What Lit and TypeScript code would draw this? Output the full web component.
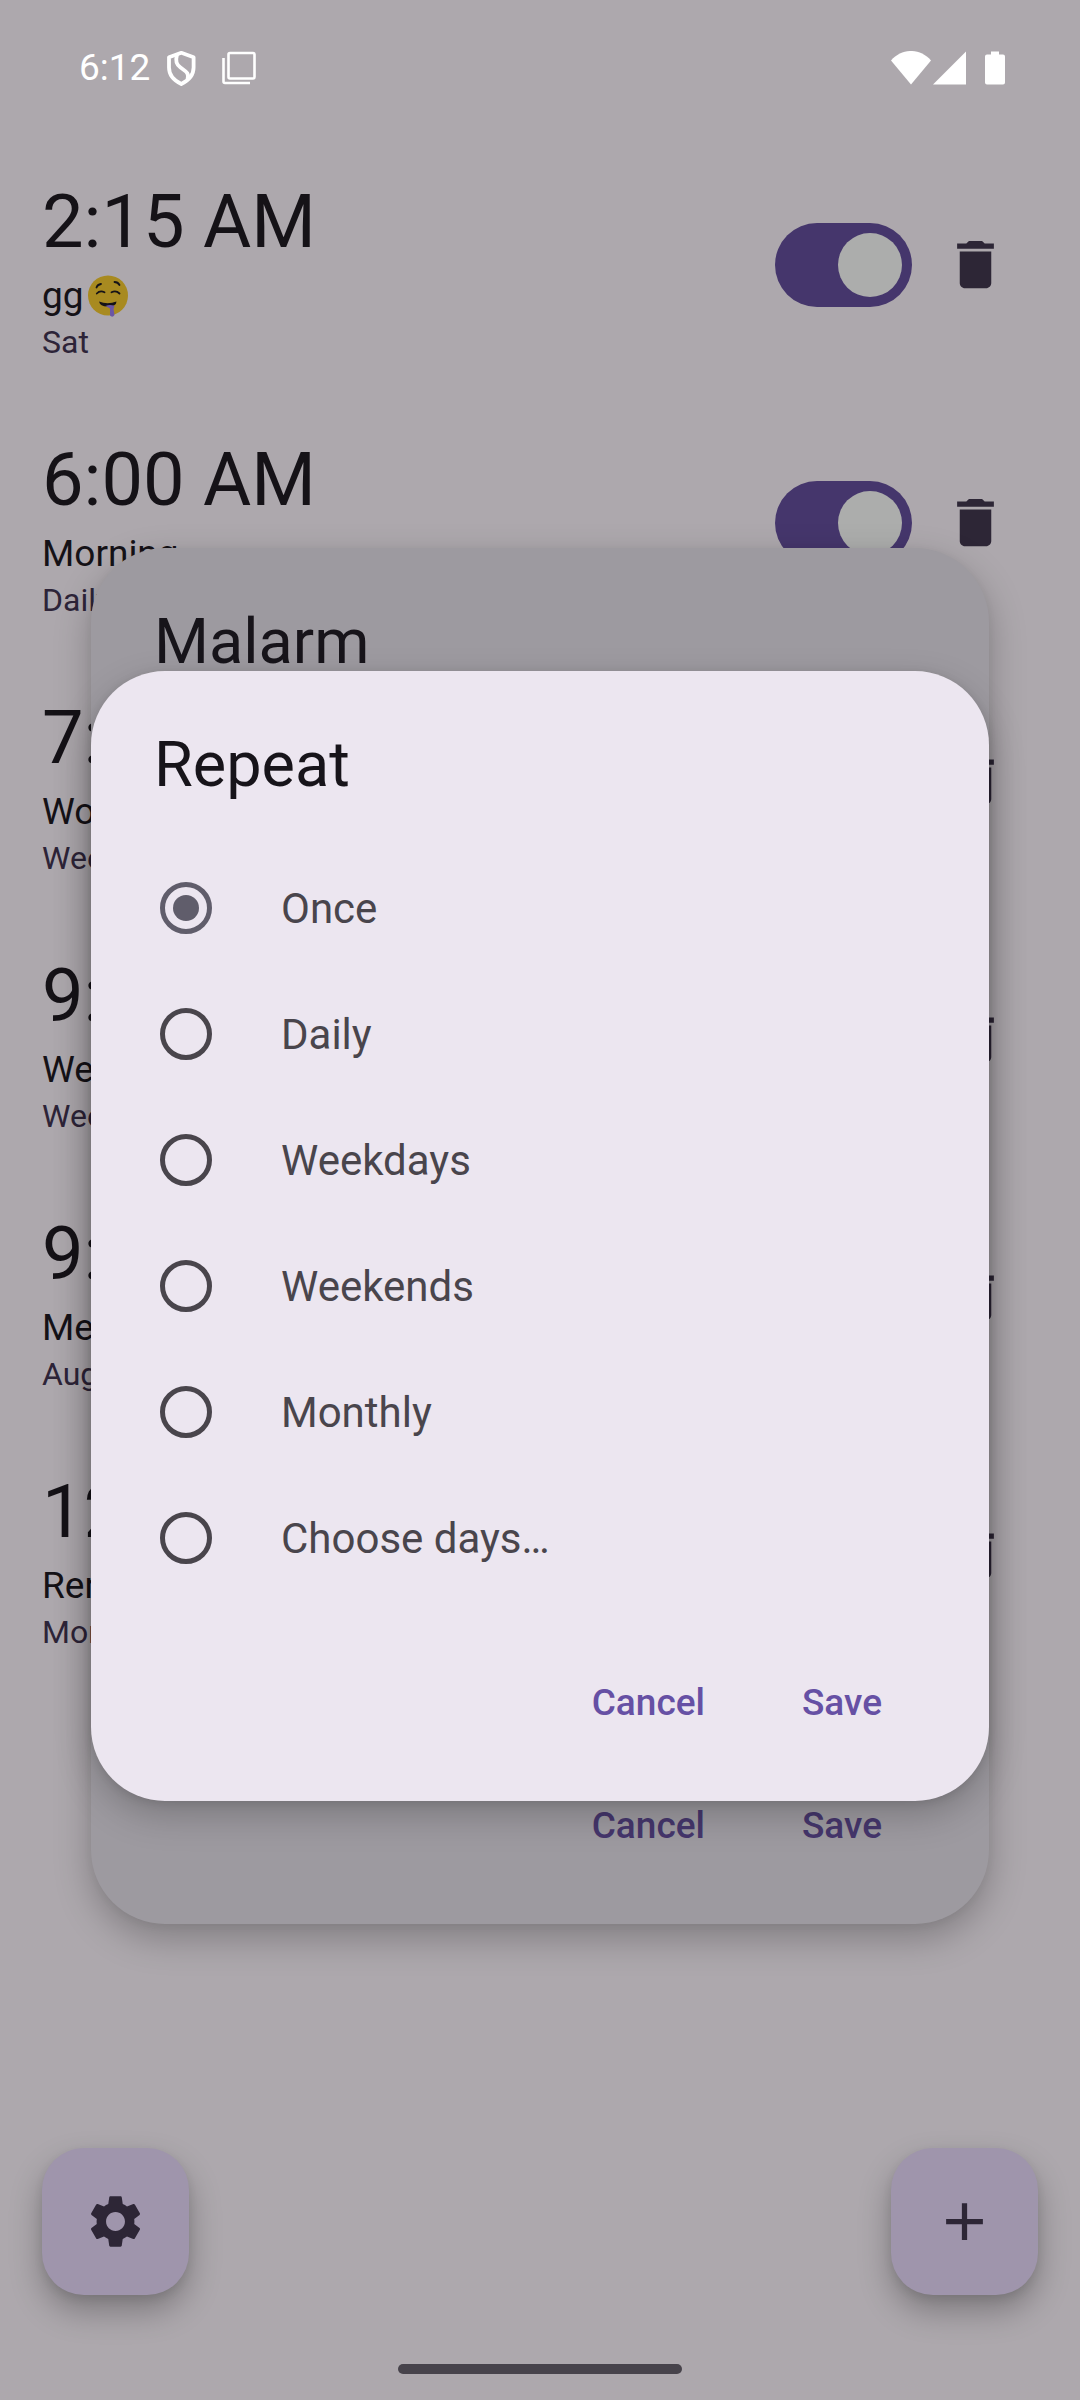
import { LitElement, html, css, svg } from "lit";
import { customElement, property, state } from "lit/decorators.js";

interface Alarm {
  time: string;
  label: string;
  repeat: string;
  emoji?: boolean;
}

const ALARMS: Alarm[] = [
  { time: "2:15 AM", label: "gg", repeat: "Sat", emoji: true },
  { time: "6:00 AM", label: "Morning", repeat: "Daily" },
  { time: "7:30 AM", label: "Work", repeat: "Weekdays" },
  { time: "9:00 AM", label: "Weekend", repeat: "Weekends" },
  { time: "9:30 AM", label: "Meeting", repeat: "Aug 12" },
  { time: "12:00 PM", label: "Rent", repeat: "Monthly" },
];

const REPEAT_OPTIONS = ["Once", "Daily", "Weekdays", "Weekends", "Monthly", "Choose days…"];

const ICONS = {
  trash: svg`<path d="M6 19c0 1.1.9 2 2 2h8c1.1 0 2-.9 2-2V7H6v12zM19 4h-3.5l-1-1h-5l-1 1H5v2h14V4z"/>`,
  plus: svg`<path d="M19 13h-6v6h-2v-6H5v-2h6V5h2v6h6v2z"/>`,
  gear: svg`<path d="M19.14,12.94c0.04,-0.3 0.06,-0.61 0.06,-0.94c0,-0.32 -0.02,-0.64 -0.07,-0.94l2.03,-1.58c0.18,-0.14 0.23,-0.41 0.12,-0.61l-1.92,-3.32c-0.12,-0.22 -0.37,-0.29 -0.59,-0.22l-2.39,0.96c-0.5,-0.38 -1.03,-0.7 -1.62,-0.94L14.4,2.81c-0.04,-0.24 -0.24,-0.41 -0.48,-0.41h-3.84c-0.24,0 -0.43,0.17 -0.47,0.41L9.25,5.35C8.66,5.59 8.12,5.92 7.63,6.29L5.24,5.33c-0.22,-0.08 -0.47,0 -0.59,0.22L2.74,8.87C2.62,9.08 2.66,9.34 2.86,9.48l2.03,1.58C4.84,11.36 4.8,11.69 4.8,12s0.02,0.64 0.07,0.94l-2.03,1.58c-0.18,0.14 -0.23,0.41 -0.12,0.61l1.92,3.32c0.12,0.22 0.37,0.29 0.59,0.22l2.39,-0.96c0.5,0.38 1.03,0.7 1.62,0.94l0.36,2.54c0.05,0.24 0.24,0.41 0.48,0.41h3.84c0.24,0 0.44,-0.17 0.47,-0.41l0.36,-2.54c0.59,-0.24 1.13,-0.56 1.62,-0.94l2.39,0.96c0.22,0.08 0.47,0 0.59,-0.22l1.92,-3.32c0.12,-0.22 0.07,-0.47 -0.12,-0.61L19.14,12.94zM12,15.6c-1.98,0 -3.6,-1.62 -3.6,-3.6s1.62,-3.6 3.6,-3.6s3.6,1.62 3.6,3.6S13.98,15.6 12,15.6z"/>`,
};

@customElement("status-bar")
class StatusBar extends LitElement {
  static styles = css`
    :host {
      display: flex;
      align-items: center;
      justify-content: space-between;
      height: 136px;
      padding: 0 75px 0 79px;
      box-sizing: border-box;
      color: #fff;
      font-size: 37px;
      line-height: 44px;
    }
    .group {
      display: flex;
      align-items: center;
    }
    .left {
      gap: 16px;
    }
    .right {
      gap: 2px;
    }
    svg {
      display: block;
    }
  `;

  render() {
    return html`
      <div class="group left">
        <span>6:12</span>
        <svg width="30" height="36" viewBox="0 0 30 36" fill="none" stroke="#fff" stroke-width="3.8" stroke-linejoin="round">
          <path d="M15.3 2.8 27.6 7.2V17.5C27.6 24.5 22.5 30.5 15.3 34 8 30.5 3 24.5 3 17.5V7.2Z" />
          <path d="M11 4.5C9.2 11.5 10.5 14.5 14.5 17.5 20 21.5 23.5 23 21.5 29.5" />
        </svg>
        <svg width="44" height="36" viewBox="0 0 44 36" fill="none" stroke="#fff" stroke-width="2.6" stroke-linejoin="round">
          <rect x="16.5" y="3" width="26" height="25.5" rx="1.5" />
          <path d="M11.5 8V31.5a1.5 1.5 0 0 0 1.5 1.5H38" />
        </svg>
      </div>
      <div class="group right">
        <svg width="40" height="34" viewBox="0 0 40 34" fill="#fff">
          <path d="M0 9.5C11-3.2 29-3.2 40 9.5L20 33.5Z" />
        </svg>
        <svg width="33" height="34" viewBox="0 0 33 34" fill="#fff">
          <path d="M0 33.5 33 .5v33Z" />
        </svg>
        <svg width="37" height="34" viewBox="0 0 37 34" fill="#fff">
          <path d="M23 .5h8v3h4q2 0 2 2V31.5q0 2-2 2H19q-2 0-2-2V5.5q0-2 2-2h4Z" />
        </svg>
      </div>
    `;
  }
}

@customElement("alarm-row")
class AlarmRow extends LitElement {
  @property({ attribute: false }) alarm!: Alarm;

  static styles = css`
    :host {
      display: flex;
      align-items: center;
      justify-content: space-between;
    }
    .text {
      padding-top: 8px;
    }
    .time {
      font-size: 74px;
      line-height: 94px;
      color: #151217;
    }
    .label {
      display: flex;
      align-items: center;
      gap: 4px;
      font-size: 37px;
      line-height: 53px;
      color: #151217;
    }
    .repeat {
      font-size: 32px;
      line-height: 40px;
      color: #2d2438;
    }
    .controls {
      display: flex;
      align-items: center;
    }
    .switch {
      appearance: none;
      display: flex;
      justify-content: flex-start;
      align-items: center;
      width: 137px;
      height: 84px;
      margin: 0;
      padding: 0 10px;
      box-sizing: border-box;
      border-radius: 42px;
      background: #7b7580;
    }
    .switch:checked {
      justify-content: flex-end;
      background: #45366c;
    }
    .switch::before {
      content: "";
      width: 64px;
      height: 64px;
      border-radius: 50%;
      background: #acadac;
    }
    .delete {
      display: grid;
      place-items: center;
      width: 126px;
      height: 126px;
      padding: 0;
      border: 0;
      background: none;
      color: #2d2636;
    }
    .icon {
      width: 63px;
      height: 63px;
      fill: currentColor;
    }
    .emoji {
      width: 40px;
      height: 42px;
    }
  `;

  render() {
    const { time, label, repeat, emoji } = this.alarm;
    return html`
      <div class="text">
        <div class="time">${time}</div>
        <div class="label">
          <span>${label}</span>
          ${emoji
            ? html`<svg class="emoji" viewBox="0 0 40 42" role="img" aria-label="🤤">
                <circle cx="20" cy="20.5" r="20" fill="#a88a20" />
                <g fill="none" stroke="#151217" stroke-width="1.8" stroke-linecap="round">
                  <path d="M8.5 12.5Q9.5 9.5 13 9M26.5 7Q30 7 31.5 10" />
                  <path d="M8.8 18.5Q12 15 16.5 17.3M23.5 17.3Q28 15 31.5 18.5" />
                </g>
                <path d="M11 26.5Q19.5 30 28.5 26.5 28.5 31.5 19.5 31.5 12 31.5 11 26.5Z" fill="#151217" />
                <path d="M17.5 31Q22 29 26.5 31L25.5 34 26.5 40Q24.5 43 22 40.5L22 33.5Z" fill="#6b56a5" />
              </svg>`
            : ""}
        </div>
        <div class="repeat">${repeat}</div>
      </div>
      <div class="controls">
        <input class="switch" type="checkbox" role="switch" checked aria-label=${`Alarm at ${time}`} />
        <button class="delete" type="button" aria-label=${`Delete alarm at ${time}`}>
          <svg class="icon" viewBox="0 0 24 24">${ICONS.trash}</svg>
        </button>
      </div>
    `;
  }
}

@customElement("modal-card")
class ModalCard extends LitElement {
  @property() heading = "";

  static styles = css`
    :host {
      display: flex;
      flex-direction: column;
      padding: 52px 0 46px;
      border-radius: 74px;
      box-sizing: border-box;
      background: var(--card-bg);
      box-shadow: var(--card-shadow);
    }
    .heading {
      margin: 0 63px 38px;
      font-size: 63px;
      font-weight: 400;
      line-height: 84px;
      color: #17141a;
    }
    .body {
      flex: 1;
    }
    .actions {
      display: flex;
      justify-content: flex-end;
      gap: 13px;
      padding: 49px 65px 0 0;
    }
    .action {
      height: 105px;
      padding: 0 42px;
      border: 0;
      background: none;
      color: var(--card-accent);
      font-family: inherit;
      font-size: 37px;
      font-weight: 500;
      line-height: 53px;
    }
  `;

  render() {
    return html`
      <h2 class="heading">${this.heading}</h2>
      <div class="body"><slot></slot></div>
      <div class="actions">
        <button class="action" type="button">Cancel</button>
        <button class="action" type="button">Save</button>
      </div>
    `;
  }
}

@customElement("app-root")
class AppRoot extends LitElement {
  @state() private selected = "Once";

  static styles = css`
    :host {
      display: grid;
      min-height: 100vh;
      background: #ada8ad;
      font-family: Roboto, "Noto Sans", sans-serif;
    }
    .screen,
    .overlay {
      grid-area: 1 / 1;
      min-width: 0;
    }
    .screen {
      display: flex;
      flex-direction: column;
    }
    .alarms {
      flex: 1;
      display: flex;
      flex-direction: column;
      gap: 63px;
      padding: 31px 42px 0;
    }
    .fabs {
      display: flex;
      justify-content: space-between;
      padding: 0 42px 69px;
    }
    .fab {
      display: grid;
      place-items: center;
      width: 147px;
      height: 147px;
      padding: 0;
      border: 0;
      border-radius: 42px;
      background: #9f95ac;
      color: #2d2636;
      box-shadow: 0 16px 32px rgba(0, 0, 0, 0.28), 0 4px 10px rgba(0, 0, 0, 0.08);
    }
    .icon {
      width: 63px;
      height: 63px;
      fill: currentColor;
    }
    .handle {
      align-self: center;
      width: 284px;
      height: 10px;
      margin-bottom: 26px;
      border-radius: 5px;
      background: #47434b;
    }
    .overlay {
      display: grid;
      align-content: center;
      padding: 72px 91px 0;
    }
    .settings,
    .repeat {
      grid-area: 1 / 1;
    }
    .settings {
      --card-bg: #9d9aa0;
      --card-accent: #45366c;
      --card-shadow: 0 14px 36px rgba(0, 0, 0, 0.26), 0 2px 10px rgba(0, 0, 0, 0.04);
    }
    .repeat {
      --card-bg: #ece6f0;
      --card-accent: #6650a4;
      --card-shadow: 0 14px 36px rgba(0, 0, 0, 0.22), 0 2px 10px rgba(0, 0, 0, 0.1);
      margin: 123px 0;
    }
    .options {
      display: flex;
      flex-direction: column;
      padding: 0 32px;
    }
    .option {
      display: flex;
      align-items: center;
      gap: 69px;
      height: 126px;
      padding-left: 37px;
      font-size: 42px;
      line-height: 63px;
      color: #49454c;
    }
    .radio {
      appearance: none;
      display: grid;
      place-items: center;
      width: 52px;
      height: 52px;
      margin: 0;
      box-sizing: border-box;
      border: 5px solid #49454c;
      border-radius: 50%;
    }
    .radio:checked {
      border-color: #605d6b;
    }
    .radio:checked::before {
      content: "";
      width: 26px;
      height: 26px;
      border-radius: 50%;
      background: #605d6b;
    }
  `;

  render() {
    return html`
      <div class="screen">
        <status-bar></status-bar>
        <main class="alarms">
          ${ALARMS.map((alarm) => html`<alarm-row .alarm=${alarm}></alarm-row>`)}
        </main>
        <div class="fabs">
          <button class="fab" type="button" aria-label="Settings">
            <svg class="icon" viewBox="0 0 24 24">${ICONS.gear}</svg>
          </button>
          <button class="fab" type="button" aria-label="Add alarm">
            <svg class="icon" viewBox="0 0 24 24">${ICONS.plus}</svg>
          </button>
        </div>
        <div class="handle"></div>
      </div>
      <div class="overlay">
        <modal-card class="settings" heading="Malarm" role="dialog" aria-label="Malarm"></modal-card>
        <modal-card class="repeat" heading="Repeat" role="dialog" aria-label="Repeat">
          <div class="options" role="radiogroup" aria-label="Repeat">
            ${REPEAT_OPTIONS.map(
              (option) => html`<label class="option">
                <input
                  class="radio"
                  type="radio"
                  name="repeat"
                  .checked=${this.selected === option}
                  @change=${() => (this.selected = option)}
                />
                <span>${option}</span>
              </label>`,
            )}
          </div>
        </modal-card>
      </div>
    `;
  }
}
